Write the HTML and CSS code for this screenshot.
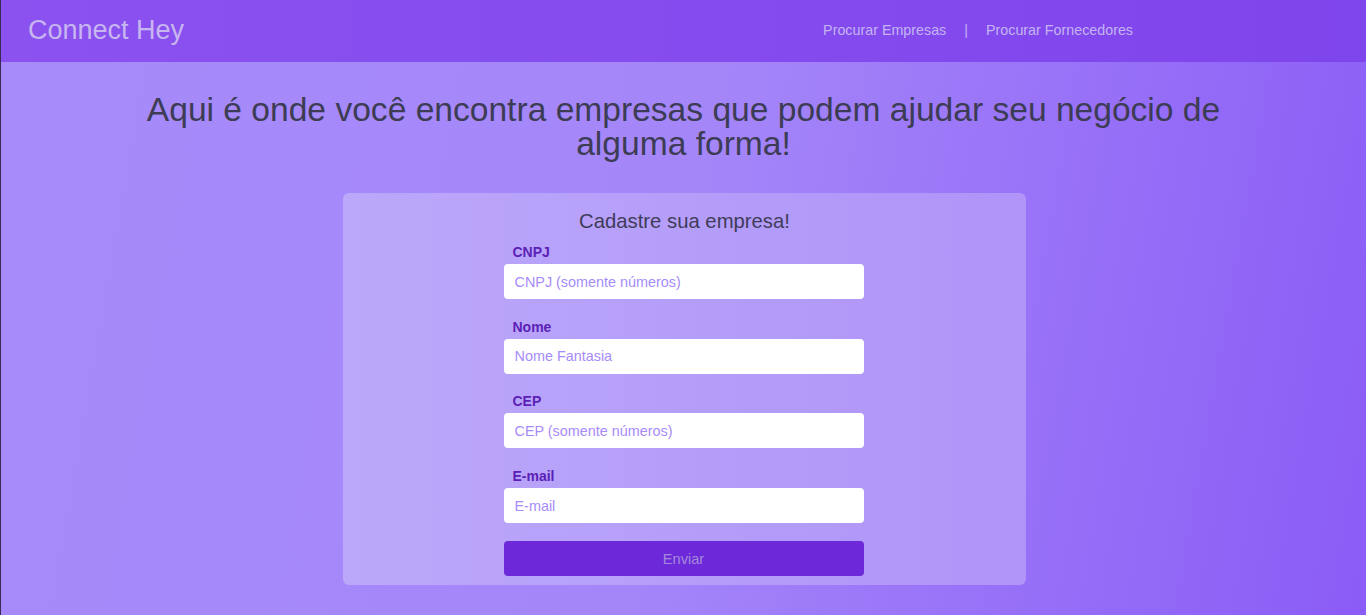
FILE: index.html
```html
<!DOCTYPE html>
<html lang="pt-BR">
<head>
<meta charset="utf-8">
<title>Connect Hey</title>
<link rel="stylesheet" href="styles.css">
</head>
<body>
<header class="topbar">
  <div class="logo">Connect Hey</div>
  <nav class="nav">
    <a href="#" class="nav-link">Procurar Empresas</a>
    <span class="nav-sep">|</span>
    <a href="#" class="nav-link">Procurar Fornecedores</a>
  </nav>
</header>
<main class="main">
  <h1 class="headline">Aqui é onde você encontra empresas que podem ajudar seu negócio de alguma forma!</h1>
  <section class="card">
    <h2 class="card-title">Cadastre sua empresa!</h2>
    <form class="form">
      <div class="field">
        <label class="label">CNPJ</label>
        <input class="input" type="text" placeholder="CNPJ (somente números)">
      </div>
      <div class="field">
        <label class="label">Nome</label>
        <input class="input" type="text" placeholder="Nome Fantasia">
      </div>
      <div class="field">
        <label class="label">CEP</label>
        <input class="input" type="text" placeholder="CEP (somente números)">
      </div>
      <div class="field">
        <label class="label">E-mail</label>
        <input class="input" type="text" placeholder="E-mail">
      </div>
      <button class="button" type="button">Enviar</button>
    </form>
  </section>
</main>
</body>
</html>
```
FILE: styles.css
```css
* { box-sizing: border-box; }
html, body { margin: 0; padding: 0; }
body {
  font-family: "Liberation Sans", Arial, sans-serif;
  min-height: 615px;
  background: linear-gradient(100deg, #a78bfa 0%, #a486f9 50%, #8b5cf6 100%);
  border-left: 1px solid #3a2a55;
  overflow: hidden;
}
.topbar {
  height: 62px;
  display: flex;
  align-items: center;
  padding: 0 0 0 27px;
  background: linear-gradient(90deg, #8b52f0 0%, #7f45ec 100%);
}
.logo {
  font-size: 27px;
  color: #c7b6ef;
  margin-top: -2px;
}
.nav {
  margin-left: auto;
  margin-right: 233px;
  margin-top: -3px;
  display: flex;
  align-items: center;
  font-size: 14.3px;
  color: #c4b4f2;
}
.nav-link { color: #c4b4f2; text-decoration: none; }
.nav-sep { margin: 0 18px 0 18px; }
.main {
  display: flex;
  flex-direction: column;
  align-items: center;
}
.headline {
  font-weight: normal;
  font-size: 33.6px;
  line-height: 34px;
  color: #3c3c54;
  text-align: center;
  max-width: 1100px;
  margin: 31px 0 0;
}
.card {
  width: 683px;
  margin-top: 32px;
  margin-left: 2px;
  border-radius: 6px;
  background: linear-gradient(90deg, #bca8fa 0%, #b39cf9 60%, #b094f8 100%);
  padding: 16px 0 9px;
  display: flex;
  flex-direction: column;
  align-items: center;
}
.card-title {
  margin: 0;
  font-weight: normal;
  font-size: 20.3px;
  line-height: 24px;
  color: #3f3c5a;
}
.form {
  width: 360px;
  display: flex;
  flex-direction: column;
  margin-top: 11px;
  margin-left: -2px;
}
.field {
  display: flex;
  flex-direction: column;
  margin-bottom: 19.7px;
}
.label {
  font-size: 14px;
  font-weight: bold;
  color: #5b21b6;
  padding-left: 9px;
  margin-bottom: 4px;
  line-height: 16px;
}
.input {
  height: 35px;
  border: none;
  border-radius: 4px;
  background: #ffffff;
  padding: 0 11px;
  font-family: "Liberation Sans", Arial, sans-serif;
  font-size: 14.4px;
  outline: none;
}
.input::placeholder { color: #a78bfa; opacity: 1; }
.button {
  height: 35px;
  border: none;
  border-radius: 4px;
  background: #6d28d9;
  color: #a58ad9;
  font-family: "Liberation Sans", Arial, sans-serif;
  font-size: 14.6px;
  margin-top: -1.7px;
}
```
